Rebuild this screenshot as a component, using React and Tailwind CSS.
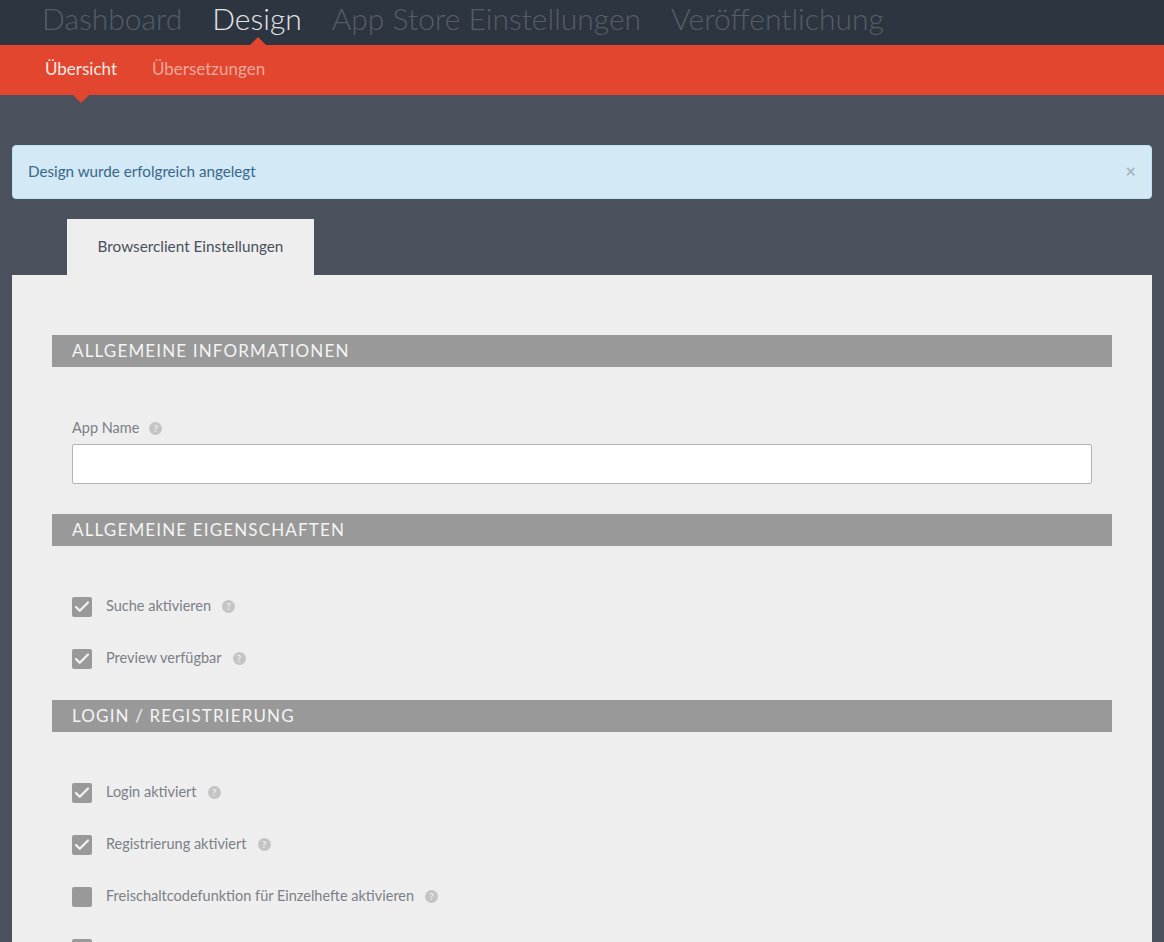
import { Check } from 'lucide-react'

const FONT = { fontFamily: '"Lato", "Noto Sans", sans-serif' }

function Help() {
  return (
    <span className="w-[13px] h-[13px] rounded-full bg-[#c4c4c4] text-[#eeeeee] text-[10px] font-bold leading-[13px] text-center shrink-0">?</span>
  )
}

function SectionHeader({ title }) {
  return (
    <div className="h-8 bg-[#999999] pl-5 text-[#f4f4f4] text-[17px] leading-8 tracking-[1.15px]">{title}</div>
  )
}

function CheckRow({ label, checked }) {
  return (
    <div className="h-[52px] flex items-center pl-5">
      <span className="w-5 h-5 rounded-[2px] bg-[#999999] flex items-center justify-center shrink-0">
        {checked && <Check size={18} strokeWidth={3} className="text-[#f2f2f2]" />}
      </span>
      <span className="ml-[14px] mr-[11px] mb-[2px] text-[14.5px] text-[#7b7f87]">{label}</span>
      <span className="flex mb-[2px]"><Help /></span>
    </div>
  )
}

export default function App() {
  return (
    <div className="h-[942px] w-[1164px] overflow-hidden bg-[#4a505c]" style={FONT}>
      <div className="h-[45px] bg-[#2d3540] flex items-center gap-[30px] pl-[42px] pb-[9px] text-[30px] font-light text-[#575d67] overflow-hidden">
        <span>Dashboard</span>
        <span className="text-[#e3e5e8]">Design</span>
        <span>App Store Einstellungen</span>
        <span>Veröffentlichung</span>
      </div>

      <div className="relative h-[50px] bg-[#e2462f] flex items-center gap-[35px] pl-[45px] pb-[2px] text-[17px]">
        <span className="text-[#fbe9e6]">Übersicht</span>
        <span className="text-[#f2a79b]">Übersetzungen</span>
        <span className="absolute left-[250px] -top-2 border-x-8 border-b-8 border-x-transparent border-b-[#e2462f]" />
        <span className="absolute left-[73px] -bottom-2 border-x-8 border-t-8 border-x-transparent border-t-[#e2462f]" />
      </div>

      <div className="px-3 pt-[50px]">
        <div className="h-[54px] rounded-[4px] border border-[#bde3f0] bg-[#d3e9f6] flex items-center justify-between px-[15px] pb-[2px] text-[15.2px] text-[#38688c]">
          <span>Design wurde erfolgreich angelegt</span>
          <span className="text-[#a9b5bf] text-[18px] font-bold leading-none">×</span>
        </div>

        <div className="mt-5 ml-[55px] w-[247px] h-14 pb-[2px] bg-[#eeeeee] flex items-center justify-center text-[15.3px] text-[#4a505c]">
          Browserclient Einstellungen
        </div>

        <div className="bg-[#eeeeee] px-10 pt-[60px]">
          <SectionHeader title="ALLGEMEINE INFORMATIONEN" />
          <div className="px-5 pt-[51px] pb-[30px]">
            <div className="flex items-center h-5 gap-[10px] text-[14.5px] text-[#7b7f87]">
              App Name <Help />
            </div>
            <div className="mt-[6px] h-10 bg-white border border-[#b4b4b4] rounded-[2px]" />
          </div>

          <SectionHeader title="ALLGEMEINE EIGENSCHAFTEN" />
          <div className="pt-[35px] pb-[15px]">
            <CheckRow label="Suche aktivieren" checked />
            <CheckRow label="Preview verfügbar" checked />
          </div>

          <SectionHeader title="LOGIN / REGISTRIERUNG" />
          <div className="pt-[35px]">
            <CheckRow label="Login aktiviert" checked />
            <CheckRow label="Registrierung aktiviert" checked />
            <CheckRow label="Freischaltcodefunktion für Einzelhefte aktivieren" />
            <div className="h-[52px] pl-5 pt-[16px] flex items-start">
              <span className="block w-5 h-5 rounded-[2px] bg-[#999999]" />
              <span className="flex ml-[130px] mt-[3px]"><Help /></span>
            </div>
          </div>
        </div>
      </div>
    </div>
  )
}
